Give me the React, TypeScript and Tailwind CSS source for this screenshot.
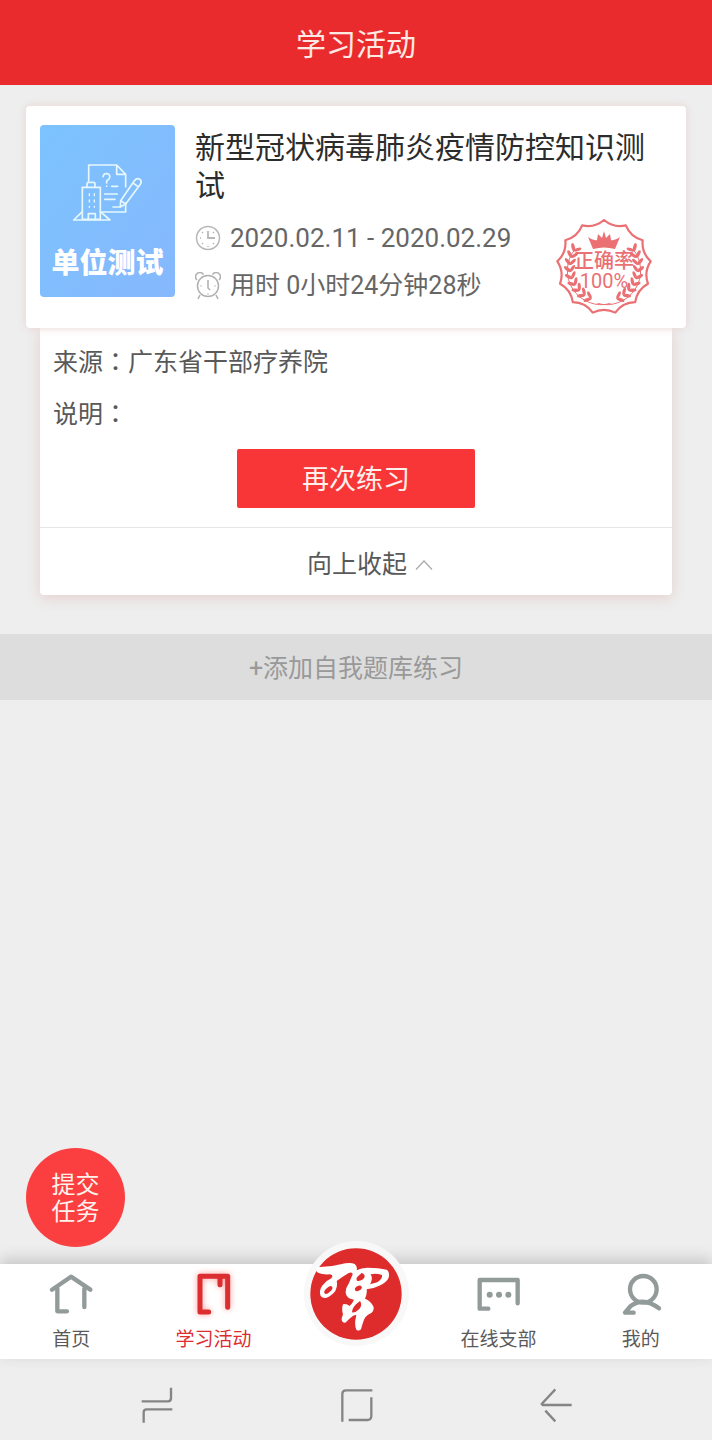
import type { ReactNode } from 'react';

const point = (radius: number, degrees: number) => {
  const a = (degrees * Math.PI) / 180;
  return `${(Math.sin(a) * radius).toFixed(2)} ${(-Math.cos(a) * radius).toFixed(2)}`;
};

// 13 peaks joined by slightly sunken curves
const step = 360 / 13;
const badgeEdge =
  `M${point(47, 0)}` +
  Array.from({ length: 13 }, (_, i) => `Q${point(40, (i + 0.5) * step)} ${point(47, (i + 1) * step)}`).join('') +
  'Z';

const leafAngles = [62, 74, 86, 98, 110, 122, 134, 146, 158];

function LaurelBranch() {
  return (
    <g>
      <path d={`M${point(34, 58)}A34 34 0 0 1 ${point(37, 190)}`} fill="none" strokeWidth="1" />
      {leafAngles.map((angle) => (
        <g key={angle} transform={`rotate(${angle}) translate(0 -34)`} stroke="none">
          <ellipse cx="-3" cy="-2.5" rx="4.2" ry="1.7" transform="rotate(42 -3 -2.5)" />
          <ellipse cx="-3" cy="2.5" rx="4" ry="1.6" transform="rotate(-42 -3 2.5)" />
        </g>
      ))}
    </g>
  );
}

function AccuracyBadge() {
  return (
    <div className="relative mt-[5px] mr-5 size-24 shrink-0 text-[#ea7074]">
      <svg viewBox="-48 -48 96 96" className="size-full" fill="currentColor" stroke="currentColor" aria-hidden="true">
        <path d={badgeEdge} fill="none" strokeWidth="2.2" strokeLinejoin="round" />
        <LaurelBranch />
        <g transform="scale(-1 1)">
          <LaurelBranch />
        </g>
        <path d="M-16-30q5 4 9 3l1-6 4 4 2-7 2 7 4-4 1 6q4 1 9-3l-5 12q-11-3-22 0z" stroke="none" />
      </svg>
      <div className="absolute inset-0 flex flex-col items-center pt-8 text-[20px] leading-5">
        <span className="font-medium">正确率</span>
        <span>100%</span>
      </div>
    </div>
  );
}

function QuizIcon() {
  return (
    <svg
      viewBox="45 35 216 180"
      className="h-[60px] w-[72px]"
      fill="none"
      stroke="#e6f8fb"
      strokeWidth="5"
      strokeLinejoin="round"
      strokeLinecap="round"
      aria-hidden="true"
    >
      <path d="M95 92V44H179L206 72V110M206 158V185H136M179 44V72H206" />
      <path d="M138 79q2-10 11-9 11 1 9 12-2 6-9 9v7M149 107v1M164 108h18M143 131h38M143 147h31M168 170h21" />
      <path d="M76 111H130V207H76ZM90 109v-8q0-5 5-5h14q5 0 5 5v8" />
      <path d="M76 184L50 209H159L130 184M94 207V190H115V207" />
      <path d="M97 130v6M97 149v6M97 168v3M112 130v6M112 149v6M112 168v3" strokeWidth="4" />
      <path d="M191 151L232 91q8-10 17-4 7 7 1 15L206 161 190 170ZM191 151L206 161M228 98L243 109" />
    </svg>
  );
}

function ClockIcon() {
  return (
    <svg viewBox="0 0 26 26" className="size-[26px]" fill="none" stroke="#b8b8b8" strokeWidth="1.5" aria-hidden="true">
      <circle cx="13" cy="13" r="11.5" />
      <path d="M13 6V13H20" strokeWidth="1.8" />
      <path d="M13 21v1M5 13h1M7 7l1 1M19 7l-1 1M7 19l1-1M19 19l-1-1" />
    </svg>
  );
}

function AlarmIcon() {
  return (
    <svg viewBox="0 0 26 28" className="h-7 w-[26px]" fill="none" stroke="#b0b0b0" strokeWidth="1.5" aria-hidden="true">
      <circle cx="13" cy="14" r="10.5" />
      <path d="M2 8A4.3 4.3 0 1 1 8.5 2.5M24 8A4.3 4.3 0 1 0 17.5 2.5M5 23l-2 4M21 23l2 4" />
      <path d="M13 8v8l2 2M13 21.500v1M5.500 14h1M19.500 14h1" />
    </svg>
  );
}

function TabItem({ label, viewBox, active, children }: { label: string; viewBox: string; active?: boolean; children: ReactNode }) {
  return (
    <a href="#" className={`flex flex-1 flex-col items-center pt-2 ${active ? 'text-[#dc2d31]' : 'text-[#929a9a]'}`}>
      <svg
        viewBox={viewBox}
        className={`h-11 w-[46px] overflow-visible ${active ? 'drop-shadow-[0_0_3px_#ff9a9a]' : ''}`}
        fill="none"
        stroke="currentColor"
        strokeWidth="13"
        strokeLinecap="round"
        strokeLinejoin="round"
        aria-hidden="true"
      >
        {children}
      </svg>
      <span className={`mt-2.5 text-[19px] leading-7 ${active ? '' : 'text-[#5a5a5a]'}`}>{label}</span>
    </a>
  );
}

function SystemButton({ label, path }: { label: string; path: string }) {
  return (
    <button type="button" aria-label={label} className="size-9">
      <svg viewBox="0 0 108 108" className="size-full" fill="none" stroke="#858585" strokeWidth="7" strokeLinejoin="round">
        <path d={path} />
      </svg>
    </button>
  );
}

export default function App() {
  return (
    <div className="flex min-h-screen flex-col bg-[#eeeeee] font-['Roboto','Noto_Sans_CJK_SC',sans-serif] text-[#595959]">
      <header className="flex h-[85px] items-center justify-center bg-[#e92b2e] pt-1">
        <h1 className="text-[30px] text-[#ffe9e4]">学习活动</h1>
      </header>

      <main className="flex flex-1 flex-col pt-[21px]">
        <article className="mx-[26px]">
          <div className="relative z-10 flex gap-5 rounded-sm bg-white px-3.5 pt-[19px] pb-[13px] shadow-[0_0_8px_#e6d3d1]">
            <div className="flex h-[172px] w-[135px] shrink-0 flex-col items-center rounded bg-linear-to-br from-[#7cc3ff] to-[#86b8fd] pt-[37px]">
              <QuizIcon />
              <span className="mt-[22px] text-[28px] leading-10 font-black text-white">单位测试</span>
            </div>
            <div className="flex-1 pt-1">
              <h2 className="text-[30px] leading-[38px] text-[#2c2c2c]">新型冠状病毒肺炎疫情防控知识测试</h2>
              <div className="mt-[9px] flex items-start justify-between">
                <div className="text-[#666666]">
                  <p className="flex h-12 items-center gap-[9px] text-[26px]">
                    <ClockIcon />
                    2020.02.11 - 2020.02.29
                  </p>
                  <p className="flex h-12 items-center gap-[9px] text-[25px]">
                    <AlarmIcon />
                    用时 0小时24分钟28秒
                  </p>
                </div>
                <AccuracyBadge />
              </div>
            </div>
          </div>

          <div className="mx-3.5 rounded-b bg-white pt-[9px] text-[25px] shadow-[0_3px_14px_#e4d0ce]">
            <div className="px-[13px] leading-[52px]">
              <p>
                来源<span className="font-['Noto_Sans_CJK_TC',sans-serif] leading-none">：</span>广东省干部疗养院
              </p>
              <p>
                说明<span className="font-['Noto_Sans_CJK_TC',sans-serif] leading-none">：</span>
              </p>
            </div>
            <button type="button" className="mx-auto mt-2 block h-[59px] w-[238px] rounded-xs bg-[#f93637] pt-1 text-[27px] text-[#fff0ec]">
              再次练习
            </button>
            <button type="button" className="mt-[19px] flex h-[68px] w-full items-center justify-center gap-2 border-t border-[#e6e6e6] pt-1.5 pl-7">
              向上收起
              <svg viewBox="0 0 18 12" className="h-3 w-[18px]" fill="none" stroke="#aaaaaa" strokeWidth="1.2" aria-hidden="true">
                <path d="M1 10.500L9 2l8 8.500" />
              </svg>
            </button>
          </div>
        </article>

        <button type="button" className="mt-[39px] h-[66px] w-full bg-[#dddddd] pt-1 text-[25px] text-[#999999]">
          +添加自我题库练习
        </button>

        <button
          type="button"
          className="mt-auto mb-[17px] ml-[26px] size-[99px] rounded-full bg-[#fb3f40] px-6 pt-0.5 text-[24px] leading-[27px] text-[#fff2ec]"
        >
          提交任务
        </button>
      </main>

      <nav className="flex h-[95px] bg-white shadow-[0_-5px_14px_#c6c6c6]">
        <TabItem label="首页" viewBox="85 397 138 132">
          <path d="M97 450L154 411L212 450M113 445V515H142M194 447V502" />
        </TabItem>
        <TabItem label="学习活动" viewBox="513 397 138 132" active>
          <path d="M566 517H540V410H623V503M600 410V435" strokeWidth="15" />
        </TabItem>
        <div className="flex flex-1 justify-center">
          <a
            href="#"
            aria-label="习"
            className="-mt-[23px] flex size-[105px] items-center justify-center rounded-full bg-[#f8f8f8]"
          >
            <svg viewBox="8 5 276 276" className="size-[92px]" aria-hidden="true">
              <circle cx="146" cy="143" r="137" fill="#de2b2b" />
              <path
                fill="#ffffff"
                d="M26 68Q28 60 38 62Q72 62 100 54Q128 46 142 53Q151 60 148 72Q162 64 180 64Q215 64 238 70Q248 76 244 94Q238 108 216 118Q200 126 178 129Q180 142 173 157Q190 164 198 180Q202 192 192 200Q176 206 170 220Q164 236 161 249Q154 256 147 250Q142 238 144 222L147 205Q138 206 128 216L114 229Q102 230 103 216L107 204Q102 188 107 174Q116 170 127 179Q136 170 140 160Q120 158 116 144Q112 128 124 112L136 84Q136 76 124 80Q104 92 88 104Q92 116 84 134Q74 148 56 155Q40 156 38 142Q36 126 50 112Q60 102 72 96Q80 86 68 84Q46 86 32 79Q26 76 26 68Z"
              />
              <g fill="#de2b2b">
                <ellipse cx="63" cy="131" rx="15" ry="7" transform="rotate(-42 63 131)" />
                <path d="M190 84Q206 80 224 86Q226 98 210 108L188 114Q198 98 190 84Z" />
                <path d="M163 80Q176 84 170 96Q162 106 150 104Q144 98 152 90Z" />
                <ellipse cx="153" cy="126" rx="11" ry="7" transform="rotate(-30 153 126)" />
                <path d="M158 164Q166 176 156 188Q144 200 134 198Q134 186 146 174Z" />
              </g>
            </svg>
          </a>
        </div>
        <TabItem label="在线支部" viewBox="106 66 138 132">
          <path d="M146 176H120V90H234V160" />
          <path d="M150 134h.1M178 134h.1M206 134h.1" strokeWidth="18" />
        </TabItem>
        <TabItem label="我的" viewBox="534 66 138 132">
          <circle cx="610" cy="118" r="40" />
          <path d="M657 175Q610 139 572 168L555 188H581" />
        </TabItem>
      </nav>

      <footer className="flex h-[81px] items-center justify-between px-[139px] pt-2.5">
        <SystemButton label="最近任务" path="M8 43H87Q96 43 96 34V2M100 67H23Q14 67 14 76V107" />
        <SystemButton label="主屏幕" path="M13 104V21Q13 10 24 10H103M100 31V87Q100 99 88 99H32" />
        <SystemButton label="返回" path="M55 7L14 51L17 54H104M25 71L55 103" />
      </footer>
    </div>
  );
}
